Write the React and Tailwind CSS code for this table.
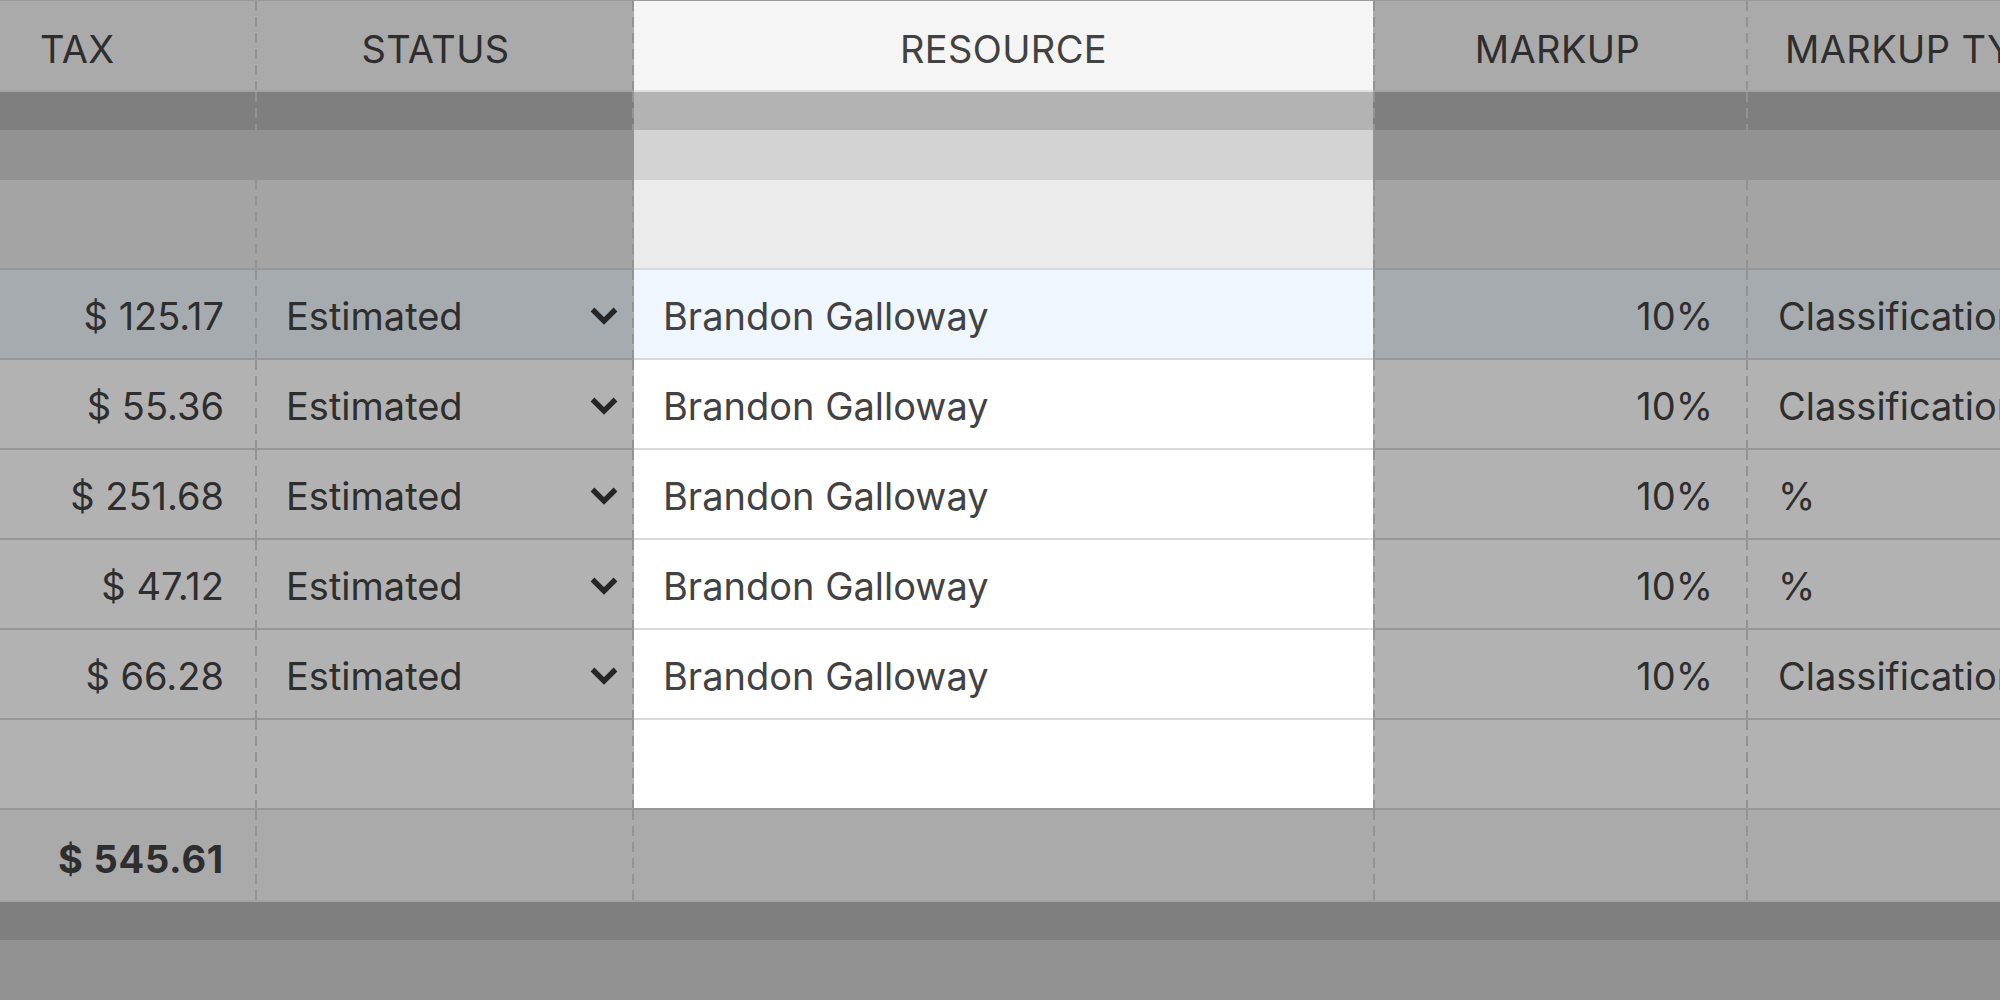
import React from "react";

const Divider = () => (
  <div className="w-[2px] shrink-0 self-stretch bg-[image:repeating-linear-gradient(to_bottom,#939393_0px,#939393_10px,transparent_10px,transparent_16px)]" />
);

function Chevron() {
  return (
    <svg width="30" height="20" viewBox="0 0 30 20" className="shrink-0">
      <path d="M3.5 3.5 L15 15 L26.5 3.5" fill="none" stroke="#262626" strokeWidth="5.4" />
    </svg>
  );
}

function Sep({ outer, inner }) {
  return (
    <div className="flex h-[2px] shrink-0">
      <div className={`w-[634px] shrink-0 ${outer}`} />
      <div className={`w-[739px] shrink-0 ${inner}`} />
      <div className={`flex-1 ${outer}`} />
    </div>
  );
}

function Band({ rowClass, resClass }) {
  return (
    <div className={`flex shrink-0 ${rowClass}`}>
      <div className="w-[255px] shrink-0" />
      <Divider />
      <div className="w-[375px] shrink-0" />
      <Divider />
      <div className={`w-[739px] shrink-0 ${resClass}`} />
      <Divider />
      <div className="w-[371px] shrink-0" />
      <Divider />
      <div className="flex-1" />
    </div>
  );
}

function DataRow({ rowClass, resClass, tax, status, resource, markup, type }) {
  return (
    <div className={`flex h-[88px] shrink-0 text-[#2e2e2e] ${rowClass}`}>
      <div className="w-[255px] shrink-0 flex items-center justify-end pr-[31px] pt-1 whitespace-nowrap">
        {tax}
      </div>
      <Divider />
      <div className="w-[375px] shrink-0 flex items-center justify-between pl-[29px] pr-[13px] pt-1 whitespace-nowrap">
        {status ? (
          <>
            <span>{status}</span>
            <Chevron />
          </>
        ) : null}
      </div>
      <Divider />
      <div className={`w-[739px] shrink-0 flex items-center pl-[29px] pt-1 text-[#424242] whitespace-nowrap ${resClass}`}>
        {resource}
      </div>
      <Divider />
      <div className="w-[371px] shrink-0 flex items-center justify-end pr-[33px] pt-1 whitespace-nowrap">
        {markup}
      </div>
      <Divider />
      <div className="w-[400px] shrink-0 flex items-center pl-[30px] pt-1 whitespace-nowrap">
        {type}
      </div>
    </div>
  );
}

const rows = [
  { tax: "$ 125.17", type: "Classification", hl: true },
  { tax: "$ 55.36", type: "Classification" },
  { tax: "$ 251.68", type: "%" },
  { tax: "$ 47.12", type: "%" },
  { tax: "$ 66.28", type: "Classification" },
];

export default function App() {
  return (
    <div className="w-[2000px] h-[1000px] overflow-hidden flex flex-col bg-[#929292] font-['Inter',sans-serif] text-[38px] leading-none">
      {/* top border */}
      <div className="h-[1px] shrink-0 bg-[#9a9a9a]" />
      {/* header */}
      <div className="flex h-[89px] shrink-0 bg-[#aaaaaa] text-[#2e2e2e] uppercase tracking-[0.01em]">
        <div className="w-[255px] shrink-0 flex items-center pl-[40px] pt-1.5 whitespace-nowrap">TAX</div>
        <Divider />
        <div className="w-[375px] shrink-0 flex items-center justify-center pr-[18px] pt-1.5 whitespace-nowrap">STATUS</div>
        <Divider />
        <div className="w-[739px] shrink-0 flex items-center justify-center pt-1.5 bg-[#f5f5f5] text-[#424242] whitespace-nowrap">
          RESOURCE
        </div>
        <Divider />
        <div className="w-[371px] shrink-0 flex items-center justify-center pr-[6px] pt-1.5 whitespace-nowrap">MARKUP</div>
        <Divider />
        <div className="w-[400px] shrink-0 flex items-center pl-[37px] pt-1.5 whitespace-nowrap">MARKUP TYPE</div>
      </div>
      <Sep outer="bg-[#a2a2a2]" inner="bg-[#e0e0e0]" />
      <Band rowClass="h-[38px] bg-[#7f7f7f]" resClass="bg-[#b3b3b3]" />
      <Band rowClass="h-[50px] bg-[#929292]" resClass="bg-[#d3d3d3]" />
      <Band rowClass="h-[88px] bg-[#a4a4a4]" resClass="bg-[#ebebeb]" />

      {rows.map((r, i) => (
        <React.Fragment key={i}>
          <Sep outer="bg-[#979797]" inner="bg-[#d9d9d9]" />
          <DataRow
            rowClass={r.hl ? "bg-[#a6abaf]" : "bg-[#b2b2b2]"}
            resClass={r.hl ? "bg-[#eff6fe]" : "bg-[#ffffff]"}
            tax={r.tax}
            status="Estimated"
            resource="Brandon Galloway"
            markup="10%"
            type={r.type}
          />
        </React.Fragment>
      ))}
      <Sep outer="bg-[#979797]" inner="bg-[#d9d9d9]" />
      <DataRow rowClass="bg-[#b2b2b2]" resClass="bg-[#ffffff]" />

      {/* total row */}
      <Sep outer="bg-[#979797]" inner="bg-[#979797]" />
      <div className="flex h-[90px] shrink-0 bg-[#aaaaaa] text-[#2e2e2e]">
        <div className="w-[255px] shrink-0 flex items-center justify-end pr-[31px] pt-2 font-bold tracking-[0.02em] whitespace-nowrap">
          $ 545.61
        </div>
        <Divider />
        <div className="w-[375px] shrink-0" />
        <Divider />
        <div className="w-[739px] shrink-0" />
        <Divider />
        <div className="w-[371px] shrink-0" />
        <Divider />
        <div className="flex-1" />
      </div>
      <div className="h-[2px] shrink-0 bg-[#a2a2a2]" />
      <div className="h-[38px] shrink-0 bg-[#7f7f7f]" />
      <div className="flex-1 bg-[#929292]" />
    </div>
  );
}
